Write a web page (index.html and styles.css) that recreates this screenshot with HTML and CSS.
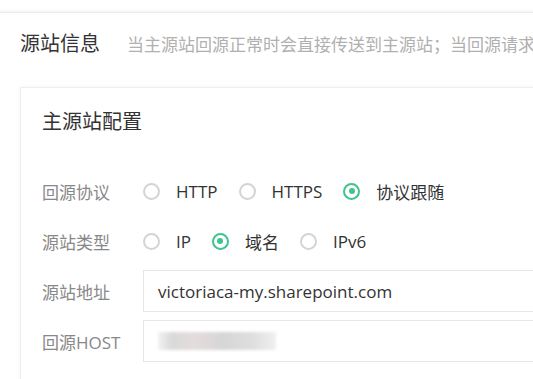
FILE: index.html
```html
<!DOCTYPE html>
<html lang="zh-CN">
    <head>
        <meta charset="UTF-8">
        <title>源站信息</title>
        <link rel="stylesheet" href="styles.css">
    </head>
    <body>
        <div class="page">
            <div class="panel">
                <div class="panel-head">
                    <span class="panel-title">源站信息</span>
                    <span class="panel-tip">当主源站回源正常时会直接传送到主源站；当回源请求失败时会切换到备源站</span>
                </div>
                <div class="box">
                    <div class="box-title">主源站配置</div>
                    <div class="form">
                        <div class="row">
                            <span class="label">回源协议</span>
                            <div class="radios">
                                <span class="radio"><i class="circle"></i>HTTP</span>
                                <span class="radio"><i class="circle"></i>HTTPS</span>
                                <span class="radio on"><i class="circle"></i>协议跟随</span>
                            </div>
                        </div>
                        <div class="row">
                            <span class="label">源站类型</span>
                            <div class="radios">
                                <span class="radio"><i class="circle"></i>IP</span>
                                <span class="radio on"><i class="circle"></i>域名</span>
                                <span class="radio"><i class="circle"></i>IPv6</span>
                            </div>
                        </div>
                        <div class="row">
                            <span class="label">源站地址</span>
                            <div class="input">victoriaca-my.sharepoint.com</div>
                        </div>
                        <div class="row">
                            <span class="label">回源HOST</span>
                            <div class="input"><span class="blur"></span></div>
                        </div>
                    </div>
                </div>
            </div>
        </div>
    </body>
</html>
```

FILE: styles.css
```css
html, body {
    margin: 0;
    padding: 0;
    background: #fff;
    overflow: hidden;
}
body {
    font-family: "Open Sans", "Noto Sans CJK SC", sans-serif;
    color: #333;
}
.page {
    width: 900px;
    height: 379px;
    padding-top: 12px;
}
.panel {
    height: 400px;
    border-top: 1px solid #ececec;
    box-shadow: 0 -1px 3px rgba(0, 0, 0, 0.06);
    padding-left: 20px;
}
.panel-head {
    display: flex;
    align-items: baseline;
    padding-top: 17px;
    white-space: nowrap;
}
.panel-title {
    font-size: 20px;
    line-height: 28px;
    color: #333;
}
.panel-tip {
    margin-left: 27px;
    font-size: 17px;
    color: #b0b0b0;
}
.box {
    margin-top: 29px;
    height: 400px;
    border: 1px solid #eee;
    box-shadow: 0 0 4px rgba(0, 0, 0, 0.05);
    padding: 20px 0 0 21px;
}
.box-title {
    font-size: 20px;
    line-height: 28px;
    color: #333;
}
.form {
    margin-top: 34px;
    display: flex;
    flex-direction: column;
    gap: 8px;
}
.row {
    display: flex;
    align-items: center;
    height: 42px;
}
.label {
    width: 101px;
    flex: none;
    font-size: 17px;
    color: #888;
}
.radios {
    display: flex;
    align-items: center;
    gap: 21px;
}
.radio {
    display: flex;
    align-items: center;
    font-size: 17px;
    color: #333;
}
.circle {
    box-sizing: border-box;
    flex: none;
    width: 17px;
    height: 17px;
    border: 2px solid #d4d4d4;
    border-radius: 50%;
    margin-right: 16px;
    position: relative;
}
.radio.on .circle {
    border-color: #3ec48d;
}
.radio.on .circle::after {
    content: "";
    position: absolute;
    left: 3.5px;
    top: 3.5px;
    width: 6px;
    height: 6px;
    border-radius: 50%;
    background: #3ec48d;
}
.input {
    box-sizing: border-box;
    width: 600px;
    height: 42px;
    border: 1px solid #e6e6e6;
    padding-left: 14px;
    display: flex;
    align-items: center;
    font-size: 17px;
    color: #333;
}
.blur {
    display: block;
    width: 118px;
    height: 18px;
    background: linear-gradient(90deg, #f2f2f2 0, #d9d9d9 12%, #e4dcdc 30%, #d6d6d6 55%, #dedede 80%, #f0f0f0 100%);
    filter: blur(1.5px);
}
```
